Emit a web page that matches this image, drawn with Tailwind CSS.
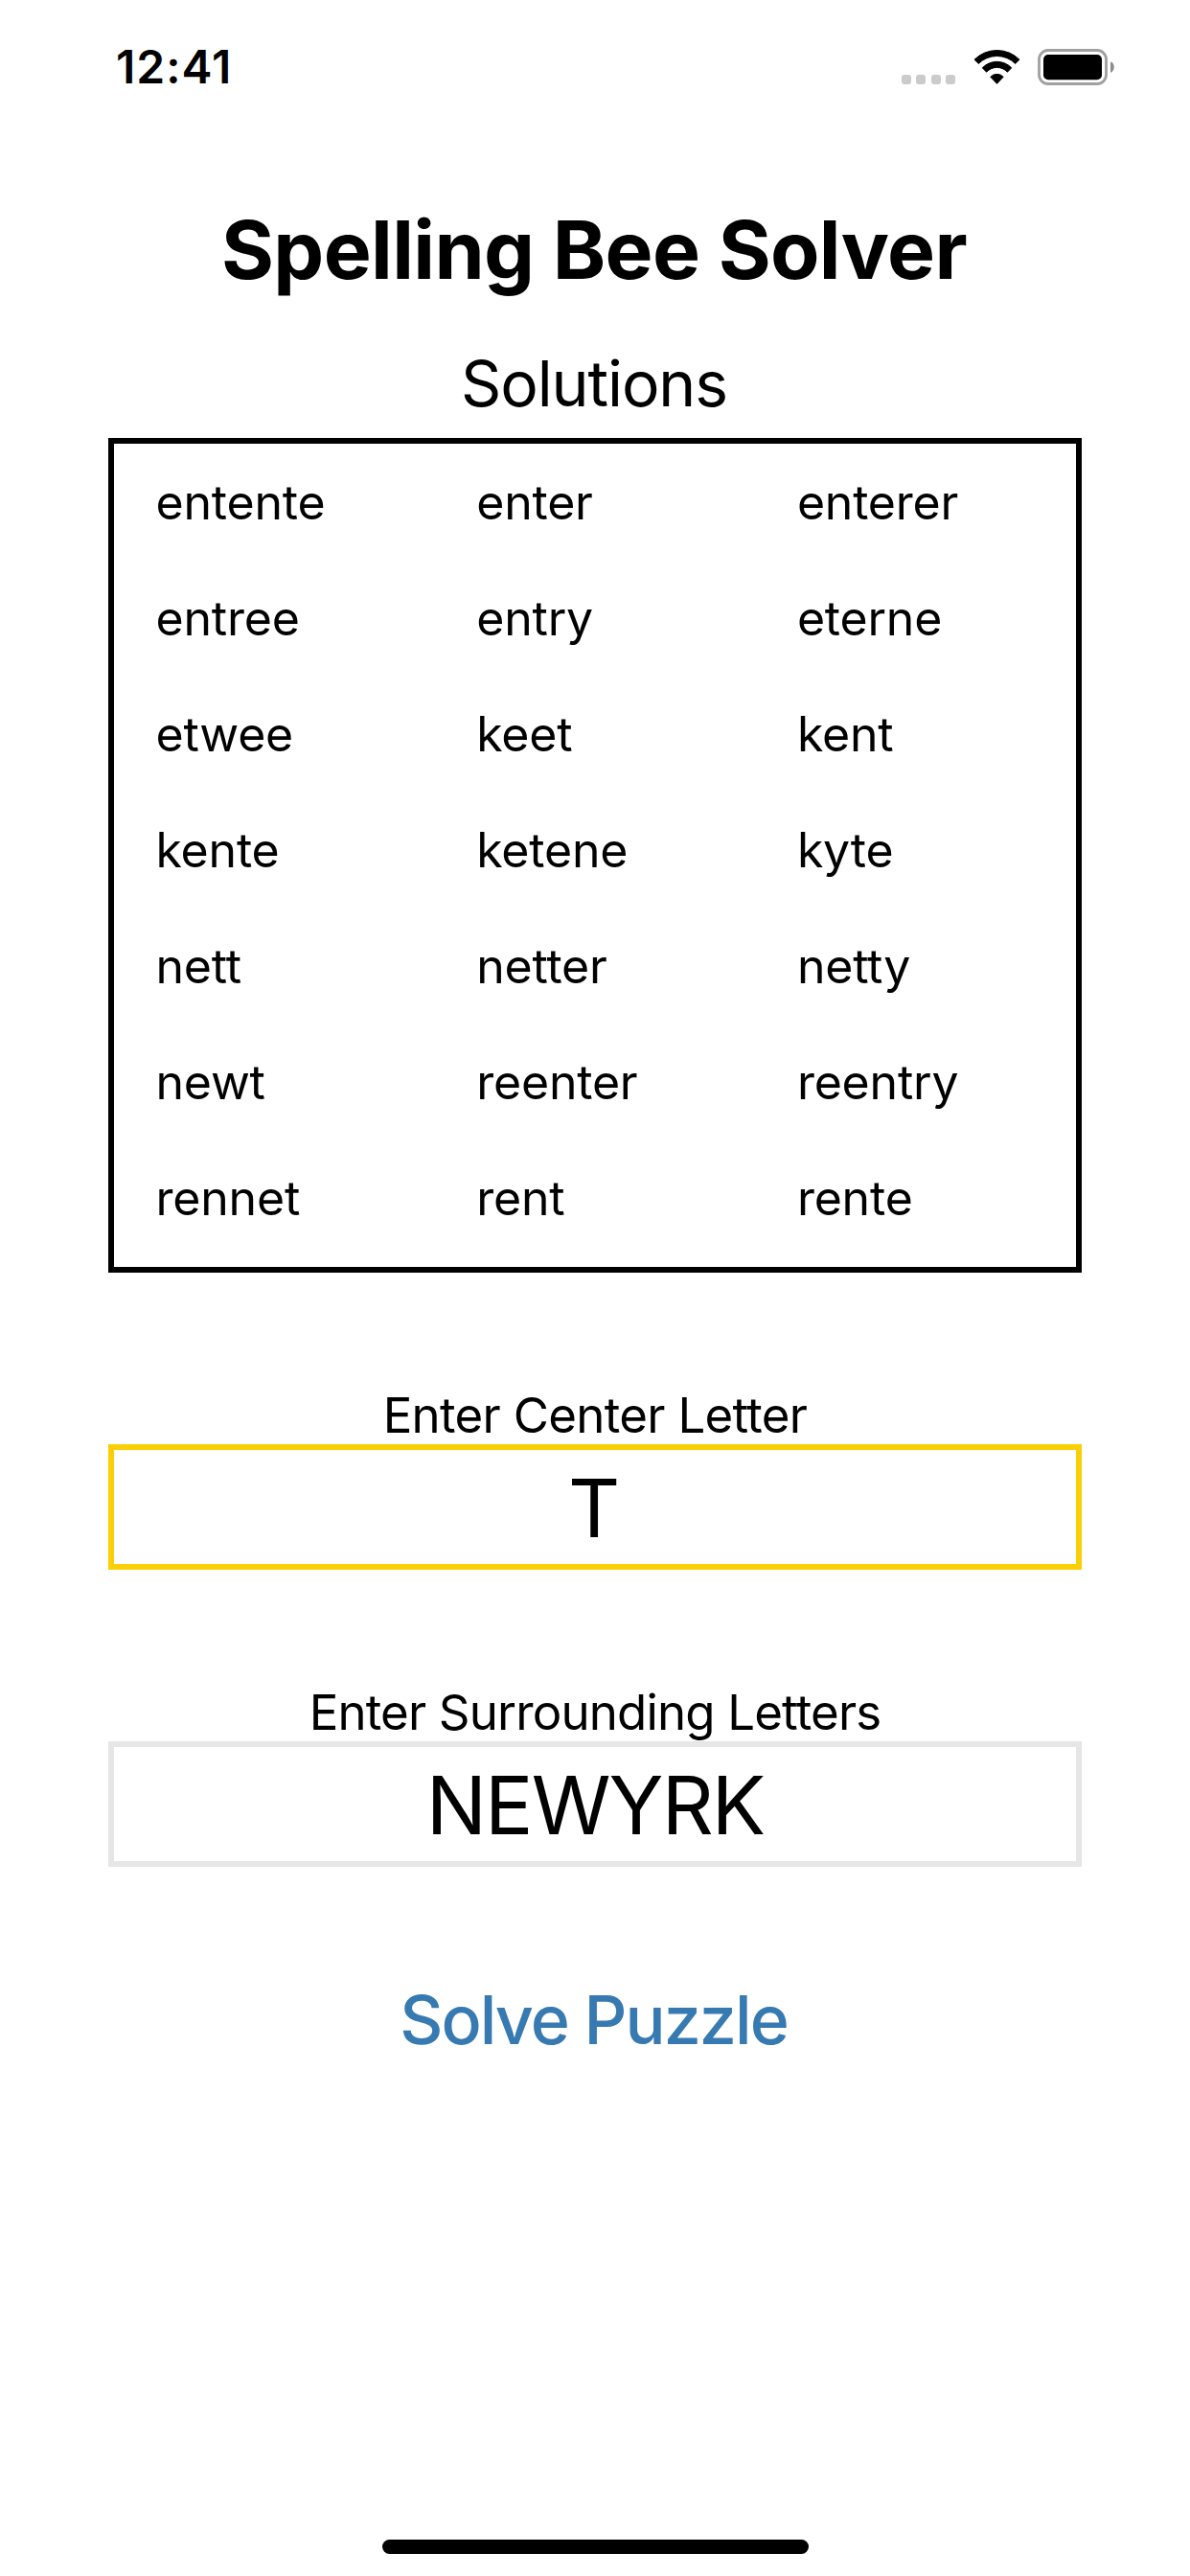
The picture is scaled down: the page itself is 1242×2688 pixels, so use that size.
<!DOCTYPE html>
<html lang="en">
<head>
<meta charset="utf-8">
<title>Spelling Bee Solver</title>
<script src="https://cdn.jsdelivr.net/npm/@tailwindcss/browser@4"></script>
</head>
<body class="bg-white">
<div class="flex h-[2688px] w-[1242px] flex-col overflow-hidden bg-white font-['Inter',sans-serif] text-black">

  <!-- Status bar -->
  <header class="flex h-[140px] items-center justify-between pr-[79px] pl-[121px]">
    <span class="text-[48px] leading-[60px] font-semibold tracking-[1px]">12:41</span>
    <div class="flex items-center">
      <div class="mt-[26px] mr-[19px] flex gap-[5.5px]">
        <span class="size-[10px] rounded-[3px] bg-[#cbcbcb]"></span>
        <span class="size-[10px] rounded-[3px] bg-[#cbcbcb]"></span>
        <span class="size-[10px] rounded-[3px] bg-[#cbcbcb]"></span>
        <span class="size-[10px] rounded-[3px] bg-[#cbcbcb]"></span>
      </div>
      <svg class="mr-[18px] h-[36px] w-[49px]" viewBox="0 0 49 36" fill="#000" stroke="#000" stroke-width="1" stroke-linejoin="round">
        <path d="M1 10.2A33.3 33.3 0 0 1 48 10.2L43.7 14.4A27.3 27.3 0 0 0 5.3 14.4Z"/>
        <path d="M9.3 18.8A21.1 21.1 0 0 1 39.7 18.8L35.4 23.2A14.8 14.8 0 0 0 13.6 23.2Z"/>
        <path d="M17.8 28.2A9.3 9.3 0 0 1 31.2 28.2L24.5 35.3Z"/>
      </svg>
      <svg class="h-[38px] w-[80px]" viewBox="0 0 80 38">
        <rect x="1.5" y="1.5" width="70" height="35" rx="9.5" fill="none" stroke="#a0a0a0" stroke-width="2.8"/>
        <rect x="6" y="6" width="61" height="26.3" rx="5" fill="#000"/>
        <path d="M76 13.2C78.5 14 79.8 16.5 79.8 19C79.8 21.5 78.5 24 76 24.8Z" fill="#8c8c8c"/>
      </svg>
    </div>
  </header>

  <main class="flex flex-col px-[113px] text-center">
    <h1 class="mt-[71px] pr-[2px] text-[84px] leading-[100px] font-bold tracking-[-0.65px]">Spelling Bee Solver</h1>
    <h2 class="mt-[49px] pr-[2px] text-[66px] leading-[80px] tracking-[-1.1px]">Solutions</h2>

    <div class="mt-[17px] grid h-[871px] auto-rows-[121px] grid-cols-[334.7px_334.7px_1fr] border-6 border-black pt-px pl-[43.5px] text-left text-[50px] leading-[121px] tracking-[-0.2px]">
      <span>entente</span><span>enter</span><span>enterer</span>
      <span>entree</span><span>entry</span><span>eterne</span>
      <span>etwee</span><span>keet</span><span>kent</span>
      <span>kente</span><span>ketene</span><span>kyte</span>
      <span>nett</span><span>netter</span><span>netty</span>
      <span>newt</span><span>reenter</span><span>reentry</span>
      <span>rennet</span><span>rent</span><span>rente</span>
    </div>

    <label class="mt-[119px] text-[51px] leading-[60px] tracking-[-0.7px]">Enter Center Letter</label>
    <div class="h-[131px] border-6 border-[#facf05] pt-px pr-[2px] text-[84px] leading-[120px]">T</div>

    <label class="mt-[119px] text-[51px] leading-[60px] tracking-[-0.84px]">Enter Surrounding Letters</label>
    <div class="h-[131px] border-6 border-[#e6e6e6] pt-px text-[84px] leading-[120px] tracking-[-1.9px]">NEWYRK</div>

    <button class="mt-[110px] pr-[3px] text-[70px] leading-[100px] font-medium tracking-[-1.97px] text-[#377ab1]">Solve Puzzle</button>
  </main>

  <!-- Home indicator -->
  <div class="mt-auto mb-[23px] h-[15px] w-[445px] self-center rounded-full bg-black"></div>
</div>
</body>
</html>
